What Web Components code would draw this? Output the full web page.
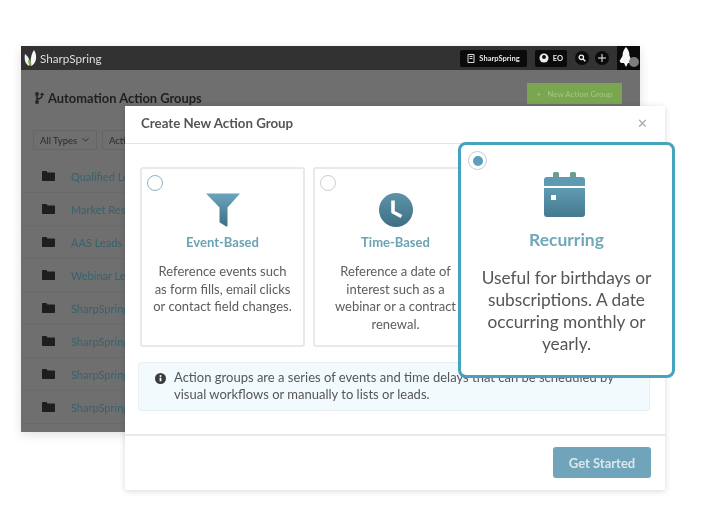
<!DOCTYPE html>
<html lang="en">
<head>
<meta charset="utf-8">
<title>Create New Action Group</title>
<style>
html,body{margin:0;padding:0;background:#fff}
body{font-family:Lato,"Open Sans",sans-serif;width:706px;height:530px;position:relative;overflow:hidden;filter:blur(.5px)}
</style>
</head>
<body>
<app-window>
  <folder-row>Qualified Leads</folder-row>
  <folder-row>Market Research</folder-row>
  <folder-row>AAS Leads</folder-row>
  <folder-row>Webinar Leads</folder-row>
  <folder-row>SharpSpring Leads</folder-row>
  <folder-row>SharpSpring Users</folder-row>
  <folder-row>SharpSpring Demo</folder-row>
  <folder-row>SharpSpring Trial</folder-row>
</app-window>

<create-modal>
  <option-card radio-color="#8fb3c0">
    <svg slot="icon" width="36" height="36" viewBox="0 0 36 36"><defs><linearGradient id="f1" x1="0" y1="0" x2="0" y2="1"><stop offset="0" stop-color="#6aa5bd"/><stop offset="1" stop-color="#3f6f84"/></linearGradient></defs><path d="M1 1.500h34L22.500 15.500V33.500c0 .8-1 1.300-1.700.8l-6-3.700a1 1 0 0 1-.3-.8V15.500z" fill="url(#f1)"/></svg>
    <span slot="title">Event-Based</span>
    Reference events such as form fills, email clicks or contact field changes.
  </option-card>
  <option-card radio-color="#c9cfd1">
    <svg slot="icon" width="36" height="36" viewBox="0 0 36 36"><defs><linearGradient id="f2" x1="0" y1="0" x2="0" y2="1"><stop offset="0" stop-color="#5d93a9"/><stop offset="1" stop-color="#3f6f84"/></linearGradient></defs><circle cx="18" cy="18" r="17" fill="url(#f2)"/><path d="M15 8.500v11.500l8.500 4.500" fill="none" stroke="#fff" stroke-width="3.600" stroke-linejoin="round"/></svg>
    <span slot="title">Time-Based</span>
    Reference a date of interest such as a webinar or a contract renewal.
  </option-card>
  <info-note>Action groups are a series of events and time delays that can be scheduled by visual workflows or manually to lists or leads.</info-note>
</create-modal>

<recurring-callout>
  <span slot="title">Recurring</span>
  Useful for birthdays or subscriptions. A date occurring monthly or yearly.
</recurring-callout>

<script>
const def=(name,html,init)=>customElements.define(name,class extends HTMLElement{
  constructor(){super();this.attachShadow({mode:'open'}).innerHTML=html;}
  connectedCallback(){if(init)init(this);}
});

def('top-bar',`<style>
:host{display:flex;align-items:center;height:24px;background:#323232;color:#ddd;font-size:11.700px}
.logo{display:flex;align-items:center;gap:1px;padding-left:3px;flex:1}
.pill{display:flex;align-items:center;justify-content:center;gap:4px;background:#0b0b0b;border-radius:2px;height:17px;color:#e6e6e6;font-size:7.500px;font-weight:700}
.a{width:67px}.b{width:32px;margin-left:8px}
.c{width:14px;height:14px;border-radius:50%;background:#0b0b0b;display:flex;align-items:center;justify-content:center}
.s1{margin-left:8px}.s2{margin-left:6px}
.bell{width:23px;height:24px;background:#0a0a0a;margin-left:8px;display:flex;align-items:center;justify-content:center}
</style>
<div class="logo"><svg width="15" height="18" viewBox="0 0 15 18"><path d="M1 5c-1 5 0 10 4 12 2-4 0-9-4-12z" fill="#eee"/><path d="M10 1C7 5 6 12 7 17c5-2 7-10 3-16z" fill="#f6f6f6"/><path d="M4 11c0 3 1 5 3 6 1-2 0-5-3-6z" fill="#7fb050"/></svg><span>SharpSpring</span></div>
<div class="pill a"><svg width="8" height="9" viewBox="0 0 8 9"><path d="M1 .5h6v8H1z" fill="none" stroke="#ddd"/><path d="M2.500 2.500h3M2.500 4.500h3" stroke="#ddd"/></svg><span>SharpSpring</span></div>
<div class="pill b"><svg width="10" height="10" viewBox="0 0 10 10"><circle cx="5" cy="5" r="4.500" fill="#eee"/><circle cx="5" cy="4" r="2" fill="#111"/></svg><span>EO</span></div>
<div class="c s1"><svg width="8" height="8" viewBox="0 0 8 8"><circle cx="3.300" cy="3.300" r="2.200" fill="none" stroke="#eee" stroke-width="1.300"/><path d="M5 5l2.300 2.300" stroke="#eee" stroke-width="1.500"/></svg></div>
<div class="c s2"><svg width="8" height="8" viewBox="0 0 8 8"><path d="M4 0v8M0 4h8" stroke="#eee" stroke-width="1"/></svg></div>
<div class="bell"><svg width="22" height="22" viewBox="0 0 22 22"><path d="M8 0c2 2 3.500 5 3.500 9l2.500 5-1.500 2H10l-2 4-2-4H3l-1.500-2L4.500 9C4.500 5 6 2 8 0z" fill="#f6f6f6"/><circle cx="16" cy="15" r="5" fill="#7c7c7c"/></svg></div>`);

def('app-window',`<style>
:host{display:flex;flex-direction:column;position:absolute;left:21px;top:46px;width:619px;height:386px;background:#6f6f6f;overflow:hidden;box-shadow:0 3px 10px rgba(0,0,0,.12)}
.head{display:flex;align-items:flex-start;justify-content:space-between;padding:13px 18px 0 14px;height:47px;box-sizing:border-box}
h1{margin:6px 0 0;font-size:12.900px;line-height:18px;font-weight:700;color:#1f1f1f;display:flex;align-items:center;gap:3px}
.new{display:flex;align-items:center;justify-content:center;gap:6px;width:95px;height:21px;background:#79a64f;color:#a5c68b;font-size:8px}
.filters{display:flex;gap:5px;padding:13px 0 0 12px}
.sel{height:20px;border:1px solid #666;box-sizing:border-box;border-radius:2px;font-size:9.500px;color:#2b2b2b;display:flex;align-items:center;padding:0 6px;gap:5px;white-space:nowrap}
.rows{margin-top:10px;display:flex;flex-direction:column}
</style>
<top-bar></top-bar>
<div class="head"><h1><svg width="10" height="12" viewBox="0 0 10 12"><g fill="none" stroke="#222" stroke-width="1.500"><circle cx="2" cy="2" r="1.200"/><circle cx="2" cy="10" r="1.200"/><path d="M2 3.500v5M2 7c3 0 5-1 5-4"/></g><path d="M5 3l2-2.500L9.500 3z" fill="#222"/></svg>Automation Action Groups</h1>
<div class="new"><span>+</span><span>New Action Group</span></div></div>
<div class="filters"><div class="sel" style="width:64px">All Types <svg width="7" height="4" viewBox="0 0 7 4" style="flex:none"><path d="M.5.500l3 2.500 3-2.500" fill="none" stroke="#333"/></svg></div><div class="sel" style="width:80px">Active</div></div>
<div class="rows"><slot></slot></div>`);

def('folder-row',`<style>
:host{display:flex;align-items:center;height:33px;padding-left:21px;gap:16px;color:#38626d;font-size:11px;box-sizing:border-box;border-bottom:1px solid #6a6a6a;white-space:nowrap}
</style>
<svg width="13" height="10" viewBox="0 0 13 10"><path d="M0 1c0-.6.400-1 1-1h3.500l1 1.500H12c.6 0 1 .4 1 1V9c0 .6-.4 1-1 1H1c-.6 0-1-.4-1-1z" fill="#1e1e1e"/></svg><span><slot></slot></span>`);

def('create-modal',`<style>
:host{display:flex;flex-direction:column;position:absolute;left:125px;top:106px;width:540px;height:384px;background:#fff;box-shadow:0 1px 6px rgba(0,0,0,.16);color:#555}
header{display:flex;align-items:center;justify-content:space-between;height:38px;flex:none;padding:0 17px 4px 16px;border-bottom:1px solid #e4e4e4;font-size:13.300px;font-weight:700;color:#555;box-sizing:border-box}
.x{color:#a9a9a9;font-weight:400;font-size:13px}
.cards{display:flex;gap:8px;padding:23px 0 0 15px;height:180px;flex:none}
.info{margin:15px 15px 0 13px;flex:none}
footer{margin-top:23px;flex:1;border-top:2px solid #e8e8e8;display:flex;justify-content:flex-end;align-items:flex-start;padding:11px 14px 0}
button{width:98px;height:31px;border:0;border-radius:3px;background:#6fa4ba;color:#d9e8ee;font:700 13px Lato,sans-serif}
</style>
<header><span>Create New Action Group</span><span class="x">✕</span></header>
<div class="cards"><slot name="cards"></slot></div>
<div class="info"><slot name="info"></slot></div>
<footer><button>Get Started</button></footer>`,
el=>{el.querySelectorAll('option-card').forEach(c=>c.slot='cards');el.querySelectorAll('info-note').forEach(c=>c.slot='info');});

def('option-card',`<style>
:host{display:flex;flex-direction:column;align-items:center;position:relative;width:165px;height:180px;box-sizing:border-box;border:2px solid #e9e9e9;border-radius:3px;background:#fff;padding:23px 10px 0;text-align:center}
.r{position:absolute;left:5px;top:6px;width:16px;height:16px;box-sizing:border-box;border-radius:50%;border:1.500px solid var(--rc,#ccc)}
.i{height:36px}
.t{margin-top:5px;font-size:13px;line-height:18px;font-weight:700;color:#6aa3b5}
.d{margin-top:12px;font-size:13px;line-height:17.500px;color:#5c5c5c}
</style>
<div class="r"></div><div class="i"><slot name="icon"></slot></div><div class="t"><slot name="title"></slot></div><div class="d"><slot></slot></div>`,
el=>el.style.setProperty('--rc',el.getAttribute('radio-color')));

def('info-note',`<style>
:host{display:flex;gap:8px;box-sizing:border-box;height:49px;padding:6px 20px 0 16px;background:#f2fafd;border:1px solid #e6eff2;border-radius:3px;font-size:13px;line-height:17px;color:#565656}
svg{flex:none;margin-top:4px}
</style>
<svg width="11" height="11" viewBox="0 0 11 11"><circle cx="5.500" cy="5.500" r="5.500" fill="#3c3c3c"/><path d="M5.500 4.700v3.600" stroke="#fff" stroke-width="1.800"/><circle cx="5.500" cy="3" r="1" fill="#fff"/></svg><div><slot></slot></div>`);

def('recurring-callout',`<style>
:host{display:flex;flex-direction:column;align-items:center;position:absolute;left:458px;top:142px;width:217px;height:236px;box-sizing:border-box;border:3px solid #46a3bd;border-radius:8px;background:#fff;padding:27px 16px 0;text-align:center}
.r{position:absolute;left:7px;top:6px;width:19px;height:19px;box-sizing:border-box;border-radius:50%;border:1.500px solid #c7ccd0;display:flex;align-items:center;justify-content:center}
.r i{width:10px;height:10px;border-radius:50%;background:#5b9fbb}
.t{margin-top:9px;font-size:17.500px;line-height:24px;font-weight:700;color:#6fa9ba}
.d{margin-top:15px;font-size:17.300px;line-height:22px;color:#555}
svg{display:block;align-self:flex-start;margin-left:67px}
</style>
<div class="r"><i></i></div>
<svg width="41" height="47" viewBox="0 0 41 47"><defs><linearGradient id="c1" x1="0" y1="0" x2="0" y2="1"><stop offset="0" stop-color="#5f9ab3"/><stop offset="1" stop-color="#457a91"/></linearGradient></defs><rect x="9" y="0" width="6" height="8" rx="1.500" fill="#6b9c8d"/><rect x="26" y="0" width="6" height="8" rx="1.500" fill="#6b9c8d"/><path d="M0 8a3 3 0 0 1 3-3h35a3 3 0 0 1 3 3v6H0z" fill="#5f9ab3"/><path d="M0 16h41v26a3 3 0 0 1-3 3H3a3 3 0 0 1-3-3z" fill="url(#c1)"/><rect x="7" y="23" width="5" height="5" fill="#fff"/></svg>
<div class="t"><slot name="title"></slot></div><div class="d"><slot></slot></div>`);
</script>
</body>
</html>
